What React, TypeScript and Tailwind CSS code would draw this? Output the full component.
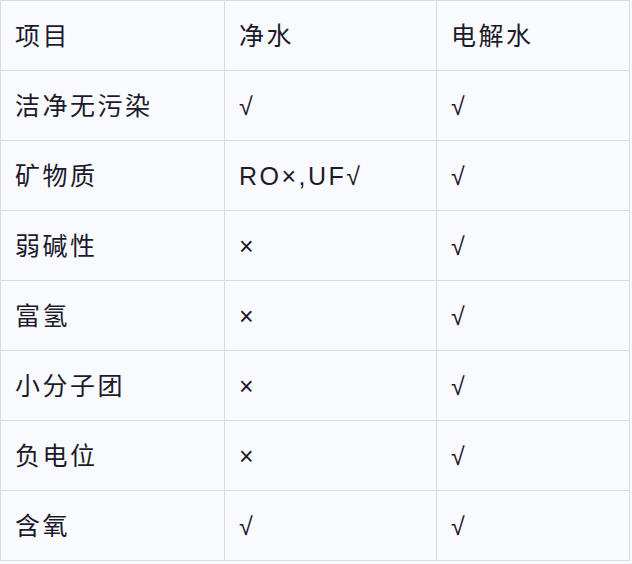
import React from "react";

const rows: [string, string, string][] = [
  ["项目", "净水", "电解水"],
  ["洁净无污染", "√", "√"],
  ["矿物质", "RO×,UF√", "√"],
  ["弱碱性", "×", "√"],
  ["富氢", "×", "√"],
  ["小分子团", "×", "√"],
  ["负电位", "×", "√"],
  ["含氧", "√", "√"],
];

export default function App() {
  return (
    <div className="w-[632px] h-[564px] bg-[#f9fafd]">
      <div
        className="grid grid-cols-[224px_212px_193px] w-[630px] border-l border-t border-[#d8dbe3] text-[#1d1a2c] text-[25px] tracking-[2.5px]"
        style={{ fontFamily: '"Liberation Sans", "Noto Sans CJK SC", sans-serif' }}
      >
        {rows.map((r, i) =>
          r.map((c, j) => (
            <div
              key={`${i}-${j}`}
              className="h-[70px] border-r border-b border-[#d8dbe3] flex items-center pl-[14px] pt-[3px] bg-[#f9fafd]"
            >
              {c}
            </div>
          ))
        )}
      </div>
    </div>
  );
}
